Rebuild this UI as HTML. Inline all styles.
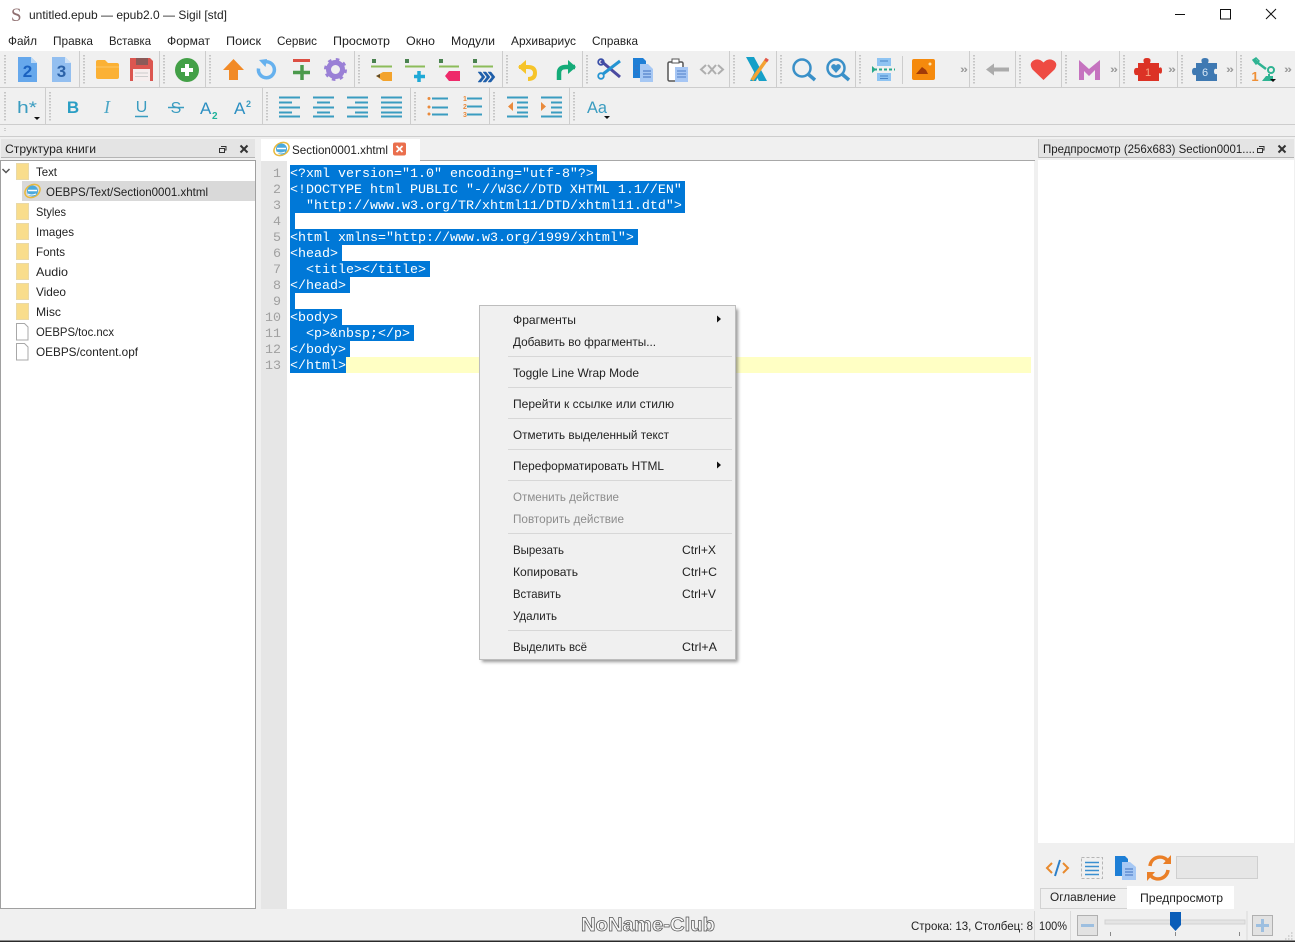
<!DOCTYPE html>
<html lang="ru"><head><meta charset="utf-8"><title>Sigil</title>
<style>
html,body{margin:0;padding:0;background:#f0f0f0;width:1295px;height:942px;overflow:hidden}
svg{display:block}
text{font-family:"Liberation Sans",sans-serif;font-size:12px;fill:#222}
.m{font-family:"Liberation Mono",monospace;font-size:13.33px;fill:#fff;white-space:pre}
.n{font-family:"Liberation Mono",monospace;font-size:13.33px;fill:#a0a0a0;text-anchor:end}
.d{fill:#8c8c8c}
.g{stroke:#b8b8b8;stroke-width:1.500;stroke-dasharray:1.500 1.500;fill:none}
.s{stroke:#cdcdcd;stroke-width:1;fill:none}
.t{stroke:#3a9cc0;stroke-width:2;fill:none}
.c{font-family:"Liberation Sans",sans-serif;fill:#9a9a9a;font-size:11px;font-weight:bold}
</style></head><body>
<svg xmlns="http://www.w3.org/2000/svg" width="1295" height="942" viewBox="0 0 1295 942">
<defs><filter id="b" x="-5%" y="-5%" width="110%" height="110%"><feGaussianBlur stdDeviation="1.500"/></filter></defs>
<rect width="1295" height="942" fill="#f0f0f0"/>
<!-- title + menu -->
<rect width="1295" height="51" fill="#fff"/>
<text x="11" y="21" style="font-family:'Liberation Serif',serif;font-size:19px;fill:#8f6f70">S</text>
<text x="29" y="19" textLength="198" lengthAdjust="spacingAndGlyphs">untitled.epub — epub2.0 — Sigil [std]</text>
<path d="M1175 14.500h10" stroke="#111" fill="none"/>
<rect x="1220.500" y="9.500" width="10" height="9.500" fill="none" stroke="#111"/>
<path d="M1266 9l10 10M1276 9l-10 10" stroke="#111" fill="none"/>
<g>
<text x="8" y="45" textLength="29" lengthAdjust="spacingAndGlyphs">Файл</text>
<text x="53" y="45" textLength="40" lengthAdjust="spacingAndGlyphs">Правка</text>
<text x="109" y="45" textLength="42" lengthAdjust="spacingAndGlyphs">Вставка</text>
<text x="167" y="45" textLength="43" lengthAdjust="spacingAndGlyphs">Формат</text>
<text x="226" y="45" textLength="35" lengthAdjust="spacingAndGlyphs">Поиск</text>
<text x="277" y="45" textLength="40" lengthAdjust="spacingAndGlyphs">Сервис</text>
<text x="333" y="45" textLength="57" lengthAdjust="spacingAndGlyphs">Просмотр</text>
<text x="406" y="45" textLength="29" lengthAdjust="spacingAndGlyphs">Окно</text>
<text x="451" y="45" textLength="44" lengthAdjust="spacingAndGlyphs">Модули</text>
<text x="511" y="45" textLength="65" lengthAdjust="spacingAndGlyphs">Архивариус</text>
<text x="592" y="45" textLength="46" lengthAdjust="spacingAndGlyphs">Справка</text>
</g>
<!-- toolbar frame -->
<path class="s" d="M0 87.500H1295M0 124.500H1295M0 136.500H1295"/>
<path class="s" d="M79.500 51V87M159.500 51V87M205.500 51V87M354.500 51V87M502.500 51V87M582.500 51V87M729.500 51V87M776.500 51V87M855.500 51V87M969.500 51V87M1015.500 51V87M1061.500 51V87M1119.500 51V87M1177.500 51V87M1236.500 51V87"/>
<path class="s" d="M45.500 88V124M262.500 88V124M410.500 88V124M489.500 88V124M569.500 88V124"/>
<path class="g" d="M5 55V84M84 55V84M164 55V84M210 55V84M359 55V84M507 55V84M587 55V84M734 55V84M781 55V84M860 55V84M974 55V84M1020 55V84M1066 55V84M1124 55V84M1182 55V84M1241 55V84"/>
<path class="g" d="M5 92V121M50 92V121M267 92V121M415 92V121M494 92V121M574 92V121"/>
<path d="M5 128v4" stroke="#aaa" stroke-dasharray="1 1"/>
<!-- row 1 icons -->
<path d="M18 57h13l6 6v19H18z" fill="#66a8ec"/><path d="M31 57l6 6h-6z" fill="#bcd9f6"/>
<text x="27.500" y="77" text-anchor="middle" style="font-size:17px;font-weight:bold;fill:#1a62c0">2</text>
<path d="M52 57h13l6 6v19H52z" fill="#93bff0"/><path d="M65 57l6 6h-6z" fill="#cfe3f8"/>
<text x="61.500" y="77" text-anchor="middle" style="font-size:17px;font-weight:bold;fill:#2b62a8">3</text>
<path d="M96 62q0-2 2-2h7l3 3h9q2 0 2 2v12q0 2-2 2H98q-2 0-2-2z" fill="#fbb135"/><path d="M96 67h23" stroke="#fdc766"/>
<path d="M130 58h20l3 3v20h-23z" fill="#db5650"/><rect x="136" y="58" width="12" height="7" fill="#8b5a58"/><rect x="133" y="69" width="17" height="12" fill="#f6eeee"/><path d="M135 73h13M135 76.500h13" stroke="#ccc"/>
<circle cx="187" cy="70" r="12" fill="#43a047"/><path d="M187 64v12M181 70h12" stroke="#fff" stroke-width="4"/>
<path d="M233.500 59l10.500 11h-6v10h-9V70h-6z" fill="#f28a26"/>
<path d="M263 62.500a8 8 0 1 1-4.500 6" fill="none" stroke="#66b1ee" stroke-width="3.500"/><path d="M259 60l8-1-1.500 8z" fill="#66b1ee"/>
<path d="M293 60.500h17" stroke="#dc4f43" stroke-width="3"/><path d="M302 65v15M293 72.500h17" stroke="#4b9a4c" stroke-width="3.500"/>
<circle cx="335.500" cy="69.500" r="7" fill="none" stroke="#9a80d6" stroke-width="5"/><circle cx="335.500" cy="69.500" r="10" fill="none" stroke="#9a80d6" stroke-width="3" stroke-dasharray="3.500 4.350"/>
<g fill="#4a8250"><rect x="372" y="59" width="4" height="4"/><rect x="405" y="59" width="4" height="4"/><rect x="439" y="59" width="4" height="4"/><rect x="473" y="59" width="4" height="4"/></g>
<path d="M371 66.500h21M405 66.500h20M439 66.500h20M473 66.500h20" stroke="#8cbc5a" stroke-width="2"/>
<path d="M376 76l7-4h9v9h-9z" fill="#f3a32c"/><path d="M376 76l4-2v4z" fill="#5b4a2a"/>
<path d="M419 71v11M414 76.500h11" stroke="#1fa9d6" stroke-width="3.500"/>
<path d="M445 76l4-5h11v10h-11z" fill="#ee2a6a"/>
<path d="M478 72l4 5-4 5h3l4-5-4-5zM483 72l4 5-4 5h3l4-5-4-5zM488 72l4 5-4 5h3l4-5-4-5z" fill="#1f5faa" stroke="#1f5faa" stroke-width=".5"/>
<path d="M519 67h9q7 0 7 6t-7 6" fill="none" stroke="#f6c42a" stroke-width="4"/><path d="M518 67l8-7v14z" fill="#f6c42a"/>
<path d="M575 67h-9q-7 0-7 6v7" fill="none" stroke="#14ab78" stroke-width="4.500"/><path d="M576 67l-8-7v14z" fill="#14ab78"/>
<path d="M601 61l19 16" stroke="#4b4aa0" stroke-width="3"/><path d="M620 61l-17 13" stroke="#2494d2" stroke-width="3"/>
<circle cx="601" cy="62" r="2.800" fill="none" stroke="#3a4fa8" stroke-width="1.800"/><circle cx="601" cy="76" r="2.800" fill="none" stroke="#2494d2" stroke-width="1.800"/>
<path d="M633 58h10l3 3v17h-13z" fill="#1e7fd6"/><path d="M640 64h8l5 5v13h-13z" fill="#a6c8f4"/><path d="M643 71h8M643 74h8M643 77h8M635 66h3M635 70h3M635 74h3" stroke="#3f6fbf"/>
<rect x="668" y="62" width="15" height="19" rx="1.500" fill="#fff" stroke="#555" stroke-width="1.500"/><rect x="672" y="59" width="7" height="4" fill="#fff" stroke="#555"/><path d="M675 67h13v15h-13z" fill="#a6c6f4"/><path d="M677 71h9M677 74h9M677 77h9" stroke="#4f7fc8"/>
<path d="M706 65l-5 4.500 5 4.500M718 65l5 4.500-5 4.500M708 65l8 9M716 65l-8 9" fill="none" stroke="#aeaeae" stroke-width="2"/>
<path d="M746 57h8l13 24h-8z" fill="#15a0c8"/><path d="M750 81h6l4-9-3-5z" fill="#15a0c8"/>
<path d="M767 59l-15 21" stroke="#f3a233" stroke-width="3.500"/><path d="M765 59l3 2" stroke="#e2574c" stroke-width="3"/>
<circle cx="802" cy="68" r="8.500" fill="none" stroke="#3a90c8" stroke-width="2.500"/><path d="M808 74l7 6" stroke="#3a90c8" stroke-width="3.500"/>
<circle cx="836" cy="68" r="8.500" fill="none" stroke="#3a90c8" stroke-width="2.500"/><path d="M842 74l7 6" stroke="#3a90c8" stroke-width="3.500"/><path d="M836 73l-4.500-5a2.500 2.500 0 0 1 4.500-2.500a2.500 2.500 0 0 1 4.500 2.500z" fill="#3a90c8"/>
<rect x="877" y="58" width="14" height="8" fill="#8fc4f2"/><rect x="877" y="73" width="14" height="8" fill="#8fc4f2"/><path d="M880 61h8M880 76h8M880 78.500h8" stroke="#4a86c8"/><path d="M874 69.500h21" stroke="#27a88a" stroke-width="2" stroke-dasharray="3 2"/><path d="M872 66v7l4-3.500z" fill="#27a88a"/>
<path class="s" d="M902.500 56V84"/>
<rect x="912" y="59" width="23" height="21" rx="2" fill="#f58a0d"/><path d="M916 74l6-7 4 3 2 4z" fill="#a23b08"/><circle cx="930" cy="64" r="1.500" fill="#fde0a8"/>
<text x="960" y="73" class="c" textLength="8" lengthAdjust="spacingAndGlyphs">»</text>
<path d="M986 69.500l8-6v4h15v4h-15v4z" fill="#ababab"/>
<path d="M1043.500 80l-11-10.500q-4-6 1-9t10 2q5-5 10-2t1 9z" fill="#ee4b43"/>
<path d="M1079 80V60l10 9 11-9v20h-5V70l-6 6-5-5v9z" fill="#c573bf"/>
<text x="1110" y="73" class="c" textLength="8" lengthAdjust="spacingAndGlyphs">»</text>
<path d="M1138 63h6q-2-5 3-5t3 5h9v5q3-2 3 2.500t-3 2.500v8h-21v-6q-4 1-4-3.500t4-3.500z" fill="#dc3225"/>
<text x="1148" y="76" text-anchor="middle" style="font-size:11px;fill:#f6a987">1</text>
<text x="1168" y="73" class="c" textLength="8" lengthAdjust="spacingAndGlyphs">»</text>
<path d="M1196 63h6q-2-5 3-5t3 5h9v6q-3-1-3 2.500t3 2.500v7h-21v-6q-4 1-4-3.500t4-3.500z" fill="#3f79b2"/>
<text x="1205" y="76" text-anchor="middle" style="font-size:11px;fill:#d5e6f5">6</text>
<text x="1226" y="73" class="c" textLength="8" lengthAdjust="spacingAndGlyphs">»</text>
<path d="M1254 59l4 4 8 6" fill="none" stroke="#2eb392" stroke-width="2.500"/><circle cx="1271" cy="70" r="3" fill="none" stroke="#2eb392" stroke-width="2"/><path d="M1253 60l3-2 3 3-3 3z" fill="none" stroke="#2eb392" stroke-width="1.500"/><path d="M1262 81l4-5h7v5z" fill="#2eb392"/><path d="M1269 74v4" stroke="#2eb392" stroke-width="2"/>
<text x="1255" y="81" text-anchor="middle" style="font-size:13px;font-weight:bold;fill:#ef8f35">1</text>
<path d="M1270 79h6l-3 3z" fill="#111"/>
<text x="1284" y="73" class="c" textLength="8" lengthAdjust="spacingAndGlyphs">»</text>
<!-- row 2 icons -->
<text x="17" y="113" style="font-size:17px;fill:#3a9cc0" textLength="20" lengthAdjust="spacingAndGlyphs">h*</text>
<path d="M34 117h6l-3 3z" fill="#111"/>
<text x="73" y="113" text-anchor="middle" style="font-size:17px;font-weight:bold;fill:#2a9ec4">B</text>
<text x="107" y="113" text-anchor="middle" style="font-size:18px;font-style:italic;fill:#4ba6c6;font-family:'Liberation Serif',serif">I</text>
<text x="141.500" y="112" text-anchor="middle" style="font-size:16px;fill:#3a9cc0">U</text><path d="M135 116.500h13" stroke="#3a9cc0" stroke-width="1.500"/>
<text x="176" y="113" text-anchor="middle" style="font-size:16px;fill:#3a9cc0">S</text><path d="M168 107.500h16" stroke="#3a9cc0" stroke-width="1.500"/>
<text x="200" y="114" style="font-size:17px;fill:#2b8fc2">A</text><text x="212" y="119" style="font-size:10px;font-weight:bold;fill:#1fb29a">2</text>
<text x="234" y="114" style="font-size:17px;fill:#2b8fc2">A</text><text x="246" y="107" style="font-size:9px;font-weight:bold;fill:#3a9cc0">2</text>
<path class="t" d="M279 97.500h21M279 102.500h13M279 107.500h21M279 112.500h13M279 116.500h21"/>
<path class="t" d="M313 97.500h21M317 102.500h13M313 107.500h21M317 112.500h13M313 116.500h21"/>
<path class="t" d="M347 97.500h21M355 102.500h13M347 107.500h21M355 112.500h13M347 116.500h21"/>
<path class="t" d="M381 97.500h21M381 102.500h21M381 107.500h21M381 112.500h21M381 116.500h21"/>
<path d="M432 98.500h16M432 107.500h16M432 114.500h16" class="t"/><g fill="#e98a3c"><circle cx="429" cy="98.500" r="1.500"/><circle cx="429" cy="107" r="1.500"/><circle cx="429" cy="114" r="1.500"/></g>
<path class="t" d="M467 98.500h15M467 106.500h15M467 114.500h15"/><text x="463" y="101" style="font-size:7px;font-weight:bold;fill:#e98a3c">1</text><text x="463" y="109" style="font-size:7px;font-weight:bold;fill:#e98a3c">2</text><text x="463" y="117" style="font-size:7px;font-weight:bold;fill:#e98a3c">3</text>
<path class="t" d="M507 97.500h21M517 102.500h11M517 107.500h11M517 112.500h11M507 116.500h21"/><path d="M513 102v9l-5-4.500z" fill="#e98a3c"/>
<path class="t" d="M541 97.500h21M551 102.500h11M551 107.500h11M551 112.500h11M541 116.500h21"/><path d="M541 102v9l5-4.500z" fill="#e98a3c"/>
<text x="587" y="113" style="font-size:17px;fill:#3a9cc0" textLength="20" lengthAdjust="spacingAndGlyphs">Aa</text>
<path d="M604 116h6l-3 3z" fill="#111"/>
<!-- left dock -->
<rect x="1" y="139" width="254" height="19" fill="#e4e4e4"/><path d="M1 157.500h254" stroke="#b5b5b5"/>
<text x="5" y="153" textLength="91" lengthAdjust="spacingAndGlyphs">Структура книги</text>
<path d="M221 146.500h5v1M219.500 148.500h5v4h-5zM226 146v4h-1.500" fill="none" stroke="#333"/>
<path d="M240.500 145.500l7 7M247.500 145.500l-7 7" stroke="#333" stroke-width="2"/>
<rect x="0.500" y="160.500" width="255" height="748" fill="#fff" stroke="#a0a0a0"/>
<rect x="22" y="181" width="233" height="20" fill="#d9d9d9"/>
<path d="M2.500 169l3.500 3.500 3.500-3.500" fill="none" stroke="#555" stroke-width="1.500"/>
<g fill="#f9dd8c" stroke="#e9d9a8" stroke-width="1">
<rect x="16.500" y="163.500" width="12" height="16"/><rect x="16.500" y="203.500" width="12" height="16"/><rect x="16.500" y="223.500" width="12" height="16"/><rect x="16.500" y="243.500" width="12" height="16"/><rect x="16.500" y="263.500" width="12" height="16"/><rect x="16.500" y="283.500" width="12" height="16"/><rect x="16.500" y="303.500" width="12" height="16"/>
</g>
<path d="M16.500 323.500h8l3.500 3.500v13H16.500zM16.500 343.500h8l3.500 3.500v13H16.500z" fill="#fff" stroke="#a8a8a8"/>
<g>
<ellipse cx="32.500" cy="191" rx="8" ry="6" fill="none" stroke="#e8b93c" stroke-width="1.500" transform="rotate(-30 32.500 191)"/>
<circle cx="32.500" cy="191" r="5.500" fill="#4aa9dc"/><path d="M28 190.500h9" stroke="#fff" stroke-width="1.500"/><path d="M28 194q3 2 8 0" stroke="#fff" fill="none"/>
</g>
<text x="36" y="176" textLength="21" lengthAdjust="spacingAndGlyphs">Text</text>
<text x="46" y="196" textLength="162" lengthAdjust="spacingAndGlyphs">OEBPS/Text/Section0001.xhtml</text>
<text x="36" y="216" textLength="30" lengthAdjust="spacingAndGlyphs">Styles</text>
<text x="36" y="236" textLength="38" lengthAdjust="spacingAndGlyphs">Images</text>
<text x="36" y="256" textLength="29" lengthAdjust="spacingAndGlyphs">Fonts</text>
<text x="36" y="276" textLength="32" lengthAdjust="spacingAndGlyphs">Audio</text>
<text x="36" y="296" textLength="30" lengthAdjust="spacingAndGlyphs">Video</text>
<text x="36" y="316" textLength="25" lengthAdjust="spacingAndGlyphs">Misc</text>
<text x="36" y="336" textLength="78" lengthAdjust="spacingAndGlyphs">OEBPS/toc.ncx</text>
<text x="36" y="356" textLength="102" lengthAdjust="spacingAndGlyphs">OEBPS/content.opf</text>
<!-- editor -->
<path d="M420 160.500H1035" stroke="#a8a8a8"/>
<rect x="261" y="139" width="159" height="22" fill="#fff"/>
<ellipse cx="281.500" cy="149" rx="8" ry="6" fill="none" stroke="#e8b93c" stroke-width="1.500" transform="rotate(-30 281.500 149)"/>
<circle cx="281.500" cy="149" r="5.500" fill="#4aa9dc"/><path d="M277 148.500h9" stroke="#fff" stroke-width="1.500"/><path d="M277 152q3 2 8 0" stroke="#fff" fill="none"/>
<text x="292" y="154" textLength="96" lengthAdjust="spacingAndGlyphs">Section0001.xhtml</text>
<rect x="393" y="142.500" width="13" height="13" rx="2" fill="#ea6f4d"/><path d="M396.500 146l6 6M402.500 146l-6 6" stroke="#fff" stroke-width="1.800"/>
<rect x="261" y="161" width="773" height="748" fill="#fff"/>
<rect x="261" y="161" width="26" height="748" fill="#e6e6e6"/>
<rect x="346" y="357" width="685" height="16" fill="#ffffc4"/>
<g fill="#0078d7">
<rect x="290" y="165" width="307" height="16"/><rect x="290" y="181" width="395" height="16"/><rect x="290" y="197" width="395" height="16"/><rect x="290" y="213" width="5" height="16"/><rect x="290" y="229" width="348" height="16"/><rect x="290" y="245" width="52" height="16"/><rect x="290" y="261" width="140" height="16"/><rect x="290" y="277" width="60" height="16"/><rect x="290" y="293" width="5" height="16"/><rect x="290" y="309" width="52" height="16"/><rect x="290" y="325" width="124" height="16"/><rect x="290" y="341" width="60" height="16"/><rect x="290" y="357" width="56" height="16"/>
</g>
<g>
<text class="n" x="281" y="177">1</text><text class="n" x="281" y="193">2</text><text class="n" x="281" y="209">3</text><text class="n" x="281" y="225">4</text><text class="n" x="281" y="241">5</text><text class="n" x="281" y="257">6</text><text class="n" x="281" y="273">7</text><text class="n" x="281" y="289">8</text><text class="n" x="281" y="305">9</text><text class="n" x="281" y="321">10</text><text class="n" x="281" y="337">11</text><text class="n" x="281" y="353">12</text><text class="n" x="281" y="369">13</text>
</g>
<text class="m" x="290" y="177">&lt;?xml version="1.0" encoding="utf-8"?&gt;</text>
<text class="m" x="290" y="193">&lt;!DOCTYPE html PUBLIC "-//W3C//DTD XHTML 1.1//EN"</text>
<text class="m" x="306" y="209">"http://www.w3.org/TR/xhtml11/DTD/xhtml11.dtd"&gt;</text>
<text class="m" x="290" y="241">&lt;html xmlns="http://www.w3.org/1999/xhtml"&gt;</text>
<text class="m" x="290" y="257">&lt;head&gt;</text>
<text class="m" x="306" y="273">&lt;title&gt;&lt;/title&gt;</text>
<text class="m" x="290" y="289">&lt;/head&gt;</text>
<text class="m" x="290" y="321">&lt;body&gt;</text>
<text class="m" x="306" y="337">&lt;p&gt;&amp;nbsp;&lt;/p&gt;</text>
<text class="m" x="290" y="353">&lt;/body&gt;</text>
<text class="m" x="290" y="369">&lt;/html&gt;</text>
<!-- right dock -->
<rect x="1038" y="139" width="256" height="19" fill="#e4e4e4"/><path d="M1038 157.500h256" stroke="#b5b5b5"/><path d="M1038.500 139v19" stroke="#c8c8c8"/>
<text x="1043" y="153" textLength="212" lengthAdjust="spacingAndGlyphs">Предпросмотр (256x683) Section0001....</text>
<path d="M1259 146.500h5v1M1257.500 148.500h5v4h-5zM1264 146v4h-1.500" fill="none" stroke="#333"/>
<path d="M1278.500 145.500l7 7M1285.500 145.500l-7 7" stroke="#333" stroke-width="2"/>
<rect x="1038" y="160" width="256" height="683" fill="#fff"/>
<path d="M1052 863l-5 5 5 5M1063 863l5 5-5 5" fill="none" stroke="#e88a2e" stroke-width="2"/><path d="M1060 860l-5 16" stroke="#2b7fc8" stroke-width="2"/>
<rect x="1081.500" y="857.500" width="21" height="21" fill="none" stroke="#b5b5b5" stroke-dasharray="3 2"/><path d="M1085 862.500h14M1085 866.500h14M1085 870.500h14M1085 874.500h14" stroke="#3a8fd0" stroke-width="1.500"/>
<path d="M1115 856h10l3 3v17h-13z" fill="#1e7fd6"/><path d="M1122 862h8l6 5v13h-14z" fill="#a6c8f4"/><path d="M1125 869h8M1125 872h8M1125 875h8" stroke="#3f6fbf"/>
<path d="M1150 866a10 10 0 0 1 17-6M1168 870a10 10 0 0 1-17 6" fill="none" stroke="#ea7f27" stroke-width="3.500"/><path d="M1171 855v9h-8zM1147 881v-9h8z" fill="#ea7f27"/>
<rect x="1176.500" y="856.500" width="81" height="22" fill="#e6e6e6" stroke="#cfcfcf"/>
<rect x="1040.500" y="888.500" width="87" height="20" fill="#f0f0f0" stroke="#d2d2d2"/>
<rect x="1127" y="886" width="107" height="23" fill="#fff"/>
<text x="1050" y="901" textLength="66" lengthAdjust="spacingAndGlyphs">Оглавление</text>
<text x="1140" y="902" textLength="83" lengthAdjust="spacingAndGlyphs">Предпросмотр</text>
<!-- context menu -->
<rect x="482" y="309" width="256" height="353" fill="#555" opacity=".6" filter="url(#b)"/>
<rect x="479.500" y="305.500" width="256" height="354" fill="#f0f0f0" stroke="#bdbdbd"/>
<path d="M508 356.500h224M508 387.500h224M508 418.500h224M508 449.500h224M508 480.500h224M508 533.500h224M508 630.500h224" stroke="#d7d7d7"/>
<text x="513" y="324" textLength="63" lengthAdjust="spacingAndGlyphs">Фрагменты</text>
<text x="513" y="346" textLength="143" lengthAdjust="spacingAndGlyphs">Добавить во фрагменты...</text>
<text x="513" y="377" textLength="126" lengthAdjust="spacingAndGlyphs">Toggle Line Wrap Mode</text>
<text x="513" y="408" textLength="161" lengthAdjust="spacingAndGlyphs">Перейти к ссылке или стилю</text>
<text x="513" y="439" textLength="156" lengthAdjust="spacingAndGlyphs">Отметить выделенный текст</text>
<text x="513" y="470" textLength="151" lengthAdjust="spacingAndGlyphs">Переформатировать HTML</text>
<text class="d" x="513" y="501" textLength="106" lengthAdjust="spacingAndGlyphs">Отменить действие</text>
<text class="d" x="513" y="523" textLength="111" lengthAdjust="spacingAndGlyphs">Повторить действие</text>
<text x="513" y="554" textLength="51" lengthAdjust="spacingAndGlyphs">Вырезать</text>
<text x="513" y="576" textLength="65" lengthAdjust="spacingAndGlyphs">Копировать</text>
<text x="513" y="598" textLength="48" lengthAdjust="spacingAndGlyphs">Вставить</text>
<text x="513" y="620" textLength="44" lengthAdjust="spacingAndGlyphs">Удалить</text>
<text x="513" y="651" textLength="74" lengthAdjust="spacingAndGlyphs">Выделить всё</text>
<text x="682" y="554" textLength="34" lengthAdjust="spacingAndGlyphs">Ctrl+X</text>
<text x="682" y="576" textLength="35" lengthAdjust="spacingAndGlyphs">Ctrl+C</text>
<text x="682" y="598" textLength="34" lengthAdjust="spacingAndGlyphs">Ctrl+V</text>
<text x="682" y="651" textLength="35" lengthAdjust="spacingAndGlyphs">Ctrl+A</text>
<path d="M717 315.500l4 3.500-4 3.500zM717 461.500l4 3.500-4 3.500z" fill="#111"/>
<!-- status bar -->
<text x="581" y="931" textLength="134" lengthAdjust="spacingAndGlyphs" style="font-size:19px;font-weight:bold;fill:#f7f7f7;stroke:#555;stroke-width:.7">NoName-Club</text>
<text x="911" y="930" textLength="122" lengthAdjust="spacingAndGlyphs">Строка: 13, Столбец: 8</text>
<path d="M1034.500 911V940M1070.500 911V940M1247 911V940" stroke="#dadada"/>
<text x="1039" y="930" textLength="28" lengthAdjust="spacingAndGlyphs">100%</text>
<rect x="1077.500" y="915.500" width="20" height="20" fill="#e2e2e2" stroke="#b0b0b0"/><path d="M1081 925.500h13" stroke="#9dbfe0" stroke-width="3"/>
<rect x="1105" y="920" width="140" height="4" fill="#e4e4e4" stroke="#d2d2d2"/>
<path d="M1170 912h11v13l-5.500 6-5.500-6z" fill="#0a5db8"/>
<path d="M1110.500 932v4M1175.500 932v4M1239.500 932v4" stroke="#888"/>
<rect x="1252.500" y="915.500" width="20" height="20" fill="#e2e2e2" stroke="#b0b0b0"/><path d="M1256 925.500h13M1262.500 919v13" stroke="#9dbfe0" stroke-width="3"/>
<path d="M1291 933h1.500M1288 936h1.500M1291 936h1.500M1285 939h1.500M1288 939h1.500M1291 939h1.500" stroke="#b5b5b5"/>
<rect x="0" y="940.500" width="1295" height="1.500" fill="#2a2a2a"/>
</svg>
</body></html>
